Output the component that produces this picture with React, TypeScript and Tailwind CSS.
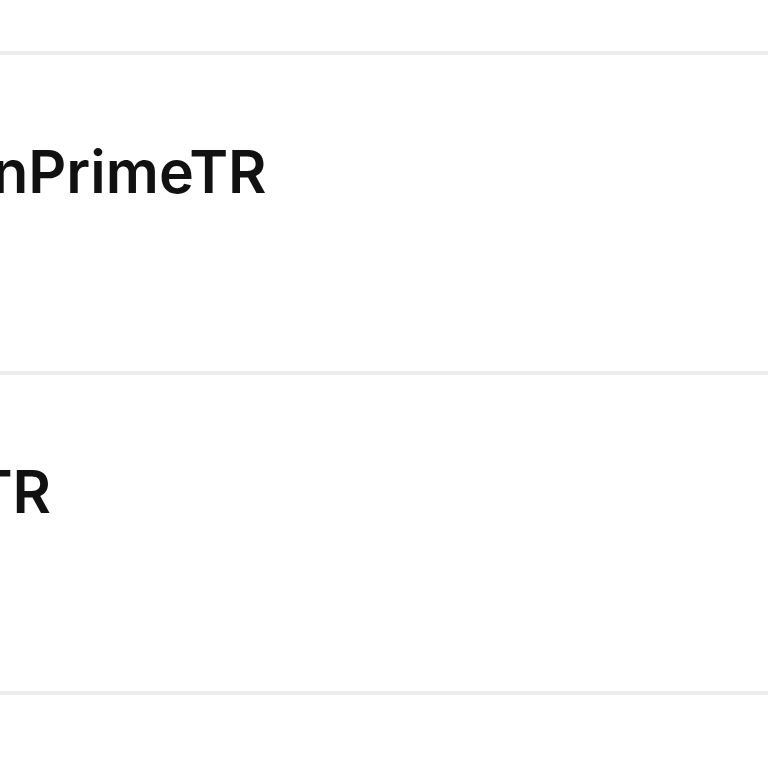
const rows = [
  { name: 'AmazonPrimeTR', shift: 'ml-[-206px]' },
  { name: 'NetflixTR', shift: 'ml-[-210px]' },
];

export default function App() {
  return (
    <div className="min-h-[768px] w-[768px] overflow-hidden bg-white font-['Inter',sans-serif] text-[#111]">
      <div className="h-[51px]" />
      <ul className="border-t-4 border-[#ececec]">
        {rows.map((row) => (
          <li key={row.name} className="h-[320px] border-b-4 border-[#ececec] pt-[87px]">
            <p className={`${row.shift} whitespace-nowrap text-[59px] font-semibold leading-none`}>
              {row.name}
            </p>
          </li>
        ))}
      </ul>
    </div>
  );
}
